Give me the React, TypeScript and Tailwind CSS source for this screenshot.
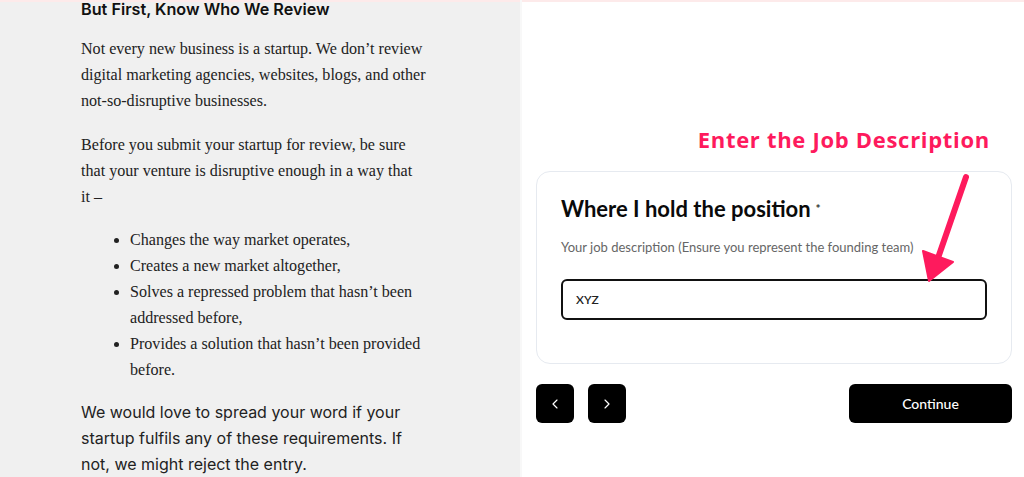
import React from "react";
import { ChevronLeft, ChevronRight } from "lucide-react";

export default function App() {
  return (
    <div className="relative flex h-[477px] w-[1024px] overflow-hidden bg-white">
      <div className="absolute left-0 top-0 h-[2px] w-full bg-[#fdeaea]" />
      {/* Left column */}
      <div className="h-full w-[520px] shrink-0 bg-[#f0f0f0] pl-[81px] pr-[80px]">
        <h2
          className="mt-[-2px] text-[16.2px] font-semibold leading-[22px] text-[#111]"
          style={{ fontFamily: "Inter, 'Liberation Sans', sans-serif" }}
        >
          But First, Know Who We Review
        </h2>
        <div
          className="text-[16.1px] leading-[26px] text-[#222]"
          style={{ fontFamily: "'Liberation Serif', 'Times New Roman', serif" }}
        >
          <p className="mt-[16px]">
            Not every new business is a startup. We don’t review digital marketing agencies, websites, blogs, and other
            not-so-disruptive businesses.
          </p>
          <p className="mt-[18px] pr-[20px]">
            Before you submit your startup for review, be sure that your venture is disruptive enough in a way that it –
          </p>
          <ul className="mt-[17px] list-disc pl-[49px]">
            <li>Changes the way market operates,</li>
            <li>Creates a new market altogether,</li>
            <li className="pr-[20px]">Solves a repressed problem that hasn’t been addressed before,</li>
            <li>Provides a solution that hasn’t been provided before.</li>
          </ul>
        </div>
        <p
          className="mt-[16px] pr-[20px] text-[16px] leading-[26px] text-[#222]"
          style={{ fontFamily: "Inter, 'Liberation Sans', sans-serif" }}
        >
          We would love to spread your word if your startup fulfils any of these requirements. If not, we might reject
          the entry.
        </p>
      </div>

      {/* Right column */}
      <div
        className="relative flex h-full flex-1 flex-col border-l-2 border-[#f8f8f8] pl-[14px] pr-[12px]"
        style={{ fontFamily: "Lato, 'Noto Sans', sans-serif" }}
      >
        <div
          className="mt-[124px] pr-[22px] text-right text-[22px] font-bold leading-[30px] tracking-[0.7px] text-[#fe1a5d]"
          style={{ fontFamily: "'Open Sans', 'Noto Sans', sans-serif" }}
        >
          Enter the Job Description
        </div>
        <div className="mt-[17px] rounded-[14px] border border-[#e6eaf0] px-[24px] pb-[43px] pt-[23px]">
          <div className="flex items-center leading-[28px]">
            <span className="text-[22px] font-bold text-[#0a0a0a]">Where I hold the position</span>
            <span className="ml-[5px] text-[12px] font-bold text-[#333]">*</span>
          </div>
          <div className="mt-[16px] text-[13px] leading-[16px] text-[#666]">
            Your job description (Ensure you represent the founding team)
          </div>
          <div className="mt-[24px] flex h-[41px] items-center rounded-[6px] border-2 border-[#111] px-[13px] text-[12px] font-semibold text-[#222]">
            XYZ
          </div>
        </div>
        <div className="mt-[20px] flex items-center">
          <button className="flex h-[39px] w-[38px] items-center justify-center rounded-[6px] bg-black text-white">
            <ChevronLeft size={16} strokeWidth={1.75} />
          </button>
          <button className="ml-[14px] flex h-[39px] w-[38px] items-center justify-center rounded-[6px] bg-black text-white">
            <ChevronRight size={16} strokeWidth={1.75} />
          </button>
          <button className="ml-auto flex h-[39px] w-[163px] items-center justify-center rounded-[6px] bg-black text-[14px] font-medium text-white">
            Continue
          </button>
        </div>

        {/* Annotation arrow */}
        <svg
          className="pointer-events-none absolute left-0 top-0"
          width="504"
          height="477"
          viewBox="520 0 504 477"
        >
          <line x1="964" y1="177" x2="936" y2="258" stroke="#fe1a5d" strokeWidth="6" strokeLinecap="round" />
          <polygon points="921,251 951,262 927,281" fill="#fe1a5d" stroke="#fe1a5d" strokeWidth="2" strokeLinejoin="round" />
        </svg>
      </div>
    </div>
  );
}
